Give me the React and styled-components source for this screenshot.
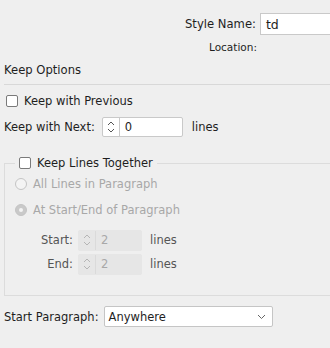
import React from "react";
import styled, { createGlobalStyle } from "styled-components";

const Global = createGlobalStyle`
  body {
    margin: 0;
    background: #efefef;
    font-family: "DejaVu Sans", "Liberation Sans", sans-serif;
    font-size: 11.5px;
    color: #1e1e1e;
    overflow: hidden;
  }
`;

const Panel = styled.div`
  width: 330px;
  height: 348px;
  padding-left: 4px;
  box-sizing: border-box;
  background: #efefef;
  white-space: nowrap;
  overflow: hidden;
`;

const NameRow = styled.div`
  display: flex;
  align-items: center;
  padding-top: 13px;
  padding-left: 181px;
  gap: 4px;
  height: 22px;
`;

const NameLabel = styled.span`
  flex-shrink: 0;
  font-size: 11.6px;
`;

const TextField = styled.div`
  flex: 1;
  height: 22px;
  box-sizing: border-box;
  background: #fff;
  border: 1px solid #c9c9c9;
  border-right: none;
  padding-left: 5px;
  display: flex;
  align-items: center;
  font-size: 12.5px;
`;

const LocationRow = styled.div`
  margin-top: 5px;
  height: 14px;
  line-height: 14px;
  font-size: 10.5px;
  padding-left: 205px;
`;

const SectionTitle = styled.div`
  margin-top: 9px;
  height: 14px;
  line-height: 14px;
  font-size: 11.6px;
  padding-bottom: 7px;
  border-bottom: 1px solid #d8d8d8;
`;

const Row = styled.div`
  display: flex;
  align-items: center;
  gap: ${(p) => p.gap || 6}px;
  height: ${(p) => p.h || 20}px;
  margin-top: ${(p) => p.mt || 0}px;
  padding-left: ${(p) => p.pl || 0}px;
  color: ${(p) => (p.disabled ? "#a8a8a8" : "#1e1e1e")};
`;

const Check = styled.span`
  width: 10px;
  height: 10px;
  border: 1px solid #7a7a7a;
  border-radius: 2px;
  background: #fff;
  flex-shrink: 0;
  margin-left: 1px;
`;

const Radio = styled.span`
  width: 10px;
  height: 10px;
  border-radius: 50%;
  border: 1px solid #c4c4c4;
  background: ${(p) => (p.checked ? "#c9c9c9" : "#f4f4f4")};
  flex-shrink: 0;
  display: flex;
  align-items: center;
  justify-content: center;
  &::after {
    content: "";
    display: ${(p) => (p.checked ? "block" : "none")};
    width: 4px;
    height: 4px;
    border-radius: 50%;
    background: #f4f4f4;
  }
`;

const Stepper = styled.div`
  display: flex;
  height: ${(p) => (p.disabled ? 21 : 20)}px;
  box-sizing: border-box;
  border: 1px solid ${(p) => (p.disabled ? "#e6e6e6" : "#c9c9c9")};
  border-radius: 2px;
  background: ${(p) => (p.disabled ? "#e6e6e6" : "#fff")};
`;

const Arrows = styled.div`
  width: 16px;
  border-right: 1px solid ${(p) => (p.disabled ? "#dadada" : "#c9c9c9")};
  display: flex;
  align-items: center;
  justify-content: center;
`;

const StepValue = styled.div`
  width: ${(p) => p.w}px;
  padding-left: 5px;
  display: flex;
  align-items: center;
  color: ${(p) => (p.disabled ? "#a8a8a8" : "#1e1e1e")};
`;

const Unit = styled.span`
  margin-left: ${(p) => (p.disabled ? 3 : 2)}px;
  color: ${(p) => (p.disabled ? "#555" : "#1e1e1e")};
`;

const Group = styled.div`
  position: relative;
  margin-top: 26px;
  border: 1px solid #dcdcdc;
  border-right: none;
  height: 133px;
  box-sizing: border-box;
  padding-top: 10px;
`;

const Legend = styled.div`
  position: absolute;
  top: -9px;
  left: 10px;
  padding: 0 4px 0 3px;
  background: #efefef;
  display: flex;
  align-items: center;
  gap: 6px;
  height: 16px;
`;

const FieldLabel = styled.span`
  width: ${(p) => p.w}px;
  text-align: right;
  color: ${(p) => (p.disabled ? "#555" : "#1e1e1e")};
`;

const Select = styled.div`
  width: 169px;
  height: 21px;
  box-sizing: border-box;
  background: #fff;
  border: 1px solid #c5c5c5;
  border-radius: 2px;
  display: flex;
  align-items: center;
  justify-content: space-between;
  padding: 0 6px 0 4px;
`;

function UpDown({ disabled }) {
  const c = disabled ? "#b5b5b5" : "#555";
  return (
    <svg width="8" height="14" viewBox="0 0 8 14">
      <path d="M1 5 L4 2 L7 5" fill="none" stroke={c} strokeWidth="1" />
      <path d="M1 9 L4 12 L7 9" fill="none" stroke={c} strokeWidth="1" />
    </svg>
  );
}

function NumberStep({ value, width, disabled }) {
  return (
    <Stepper disabled={disabled}>
      <Arrows disabled={disabled}>
        <UpDown disabled={disabled} />
      </Arrows>
      <StepValue w={width} disabled={disabled}>
        {value}
      </StepValue>
    </Stepper>
  );
}

export default function App() {
  return (
    <Panel>
      <Global />
      <NameRow>
        <NameLabel>Style Name:</NameLabel>
        <TextField>td</TextField>
      </NameRow>
      <LocationRow>Location:</LocationRow>
      <SectionTitle>Keep Options</SectionTitle>

      <Row mt={6} pl={1}>
        <Check />
        <span>Keep with Previous</span>
      </Row>
      <Row mt={6} gap={7}>
        <span>Keep with Next:</span>
        <NumberStep value="0" width={57} />
        <Unit>lines</Unit>
      </Row>

      <Group>
        <Legend>
          <Check />
          <span>Keep Lines Together</span>
        </Legend>
        <Row disabled pl={10} mt={0}>
          <Radio />
          <span>All Lines in Paragraph</span>
        </Row>
        <Row disabled pl={10} mt={6}>
          <Radio checked />
          <span>At Start/End of Paragraph</span>
        </Row>
        <Row mt={10} gap={5}>
          <FieldLabel w={68} disabled>Start:</FieldLabel>
          <NumberStep value="2" width={40} disabled />
          <Unit disabled>lines</Unit>
        </Row>
        <Row mt={4} gap={5}>
          <FieldLabel w={68} disabled>End:</FieldLabel>
          <NumberStep value="2" width={40} disabled />
          <Unit disabled>lines</Unit>
        </Row>
      </Group>

      <Row mt={10} h={21} gap={5}>
        <span>Start Paragraph:</span>
        <Select>
          <span>Anywhere</span>
          <svg width="9" height="6" viewBox="0 0 9 6">
            <path d="M1 1 L4.5 4.5 L8 1" fill="none" stroke="#666" strokeWidth="1" />
          </svg>
        </Select>
      </Row>
    </Panel>
  );
}
